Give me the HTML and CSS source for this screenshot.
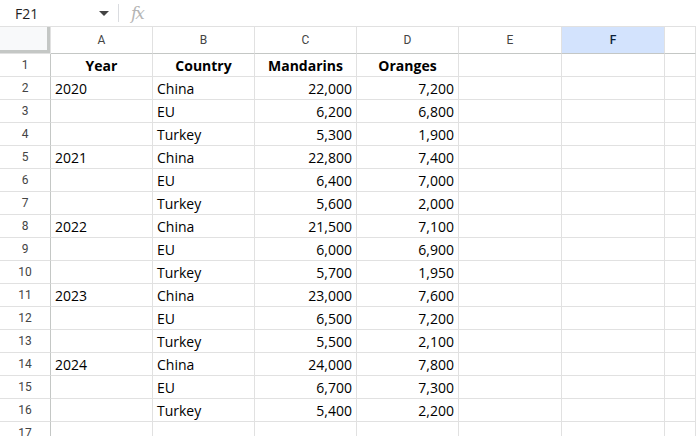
FILE: index.html
```html
<!DOCTYPE html>
<html lang="en">
<head>
  <meta charset="UTF-8" />
  <title>Citrus production • Sheet</title>
  <link rel="stylesheet" href="styles.css">
</head>
<body>
  <!-- Formula bar -->
  <div class="formula-bar">
    <div class="name-box">
      <span>F21</span>
      <svg class="caret" width="10" height="6" viewBox="0 0 10 6"><path d="M0 0h10L5 5z" fill="#444"/></svg>
    </div>
    <div class="divider"></div>
    <span class="fx">fx</span>
  </div>

  <div class="sheet" id="sheet"></div>

  <script>
    const rows = [
      ['Year', 'Country', 'Mandarins', 'Oranges'],
      ['2020', 'China', '22,000', '7,200'],
      ['', 'EU', '6,200', '6,800'],
      ['', 'Turkey', '5,300', '1,900'],
      ['2021', 'China', '22,800', '7,400'],
      ['', 'EU', '6,400', '7,000'],
      ['', 'Turkey', '5,600', '2,000'],
      ['2022', 'China', '21,500', '7,100'],
      ['', 'EU', '6,000', '6,900'],
      ['', 'Turkey', '5,700', '1,950'],
      ['2023', 'China', '23,000', '7,600'],
      ['', 'EU', '6,500', '7,200'],
      ['', 'Turkey', '5,500', '2,100'],
      ['2024', 'China', '24,000', '7,800'],
      ['', 'EU', '6,700', '7,300'],
      ['', 'Turkey', '5,400', '2,200'],
      ['', '', '', '']
    ];
    const cols = ['A', 'B', 'C', 'D', 'E', 'F', ''];
    const sheet = document.getElementById('sheet');

    function cell(text, cls) {
      const div = document.createElement('div');
      div.className = cls;
      div.textContent = text;
      sheet.appendChild(div);
    }

    // Column headers
    cell('', 'corner');
    cols.forEach(c => cell(c, c === 'F' ? 'col-head selected' : 'col-head'));

    // Data rows
    rows.forEach((r, i) => {
      cell(i + 1, 'row-head');
      for (let j = 0; j < 7; j++) {
        const v = r[j] || '';
        let cls = 'cell';
        if (i === 0 && v) cls += ' title';
        else if (j >= 2) cls += ' num';
        cell(v, cls);
      }
    });
  </script>
</body>
</html>
```

FILE: styles.css
```css
body {
  margin: 0;
  background: #fff;
  font-family: "Open Sans", Arial, sans-serif;
  overflow: hidden;
}

.formula-bar {
  display: flex;
  align-items: center;
  height: 27px;
  box-sizing: border-box;
  border-bottom: 1px solid #e1e1e1;
}

.name-box {
  display: flex;
  align-items: center;
  justify-content: space-between;
  width: 94px;
  padding: 0 9px 0 15px;
  font-size: 14px;
  color: #1f1f1f;
}

.caret {
  margin-top: 1px;
}

.divider {
  width: 1px;
  height: 18px;
  background: #dadce0;
}

.fx {
  margin-left: 12px;
  font-family: "DejaVu Serif", serif;
  font-style: italic;
  font-size: 17px;
  color: #b5b5b5;
  letter-spacing: -2px;
}

.sheet {
  display: grid;
  grid-template-columns: 51px 102px 102px 102px 102px 103px 103px 1fr;
  grid-template-rows: 27px;
  grid-auto-rows: 23px;
}

.sheet > div {
  box-sizing: border-box;
  border-right: 1px solid #e1e1e1;
  border-bottom: 1px solid #e1e1e1;
  white-space: nowrap;
  overflow: hidden;
}

.corner {
  background: #f8f9fa;
  box-shadow: inset -3px -3px 0 #c4c7c5;
}

.col-head {
  display: flex;
  align-items: center;
  justify-content: center;
  font-family: Roboto, Arial, sans-serif;
  font-size: 12px;
  color: #444;
  border-bottom-color: #c4c7c5 !important;
}

.col-head.selected {
  background: #d3e3fd;
  color: #0b1f3a;
  font-weight: 500;
}

.row-head {
  display: flex;
  align-items: center;
  justify-content: center;
  font-family: Roboto, Arial, sans-serif;
  font-size: 12px;
  color: #444;
  border-right-color: #c4c7c5 !important;
}

.cell {
  padding: 0 4px;
  font-size: 14px;
  line-height: 24px;
  color: #000;
}

.cell.num {
  text-align: right;
}

.cell.title {
  font-weight: 700;
  text-align: center;
}
```
